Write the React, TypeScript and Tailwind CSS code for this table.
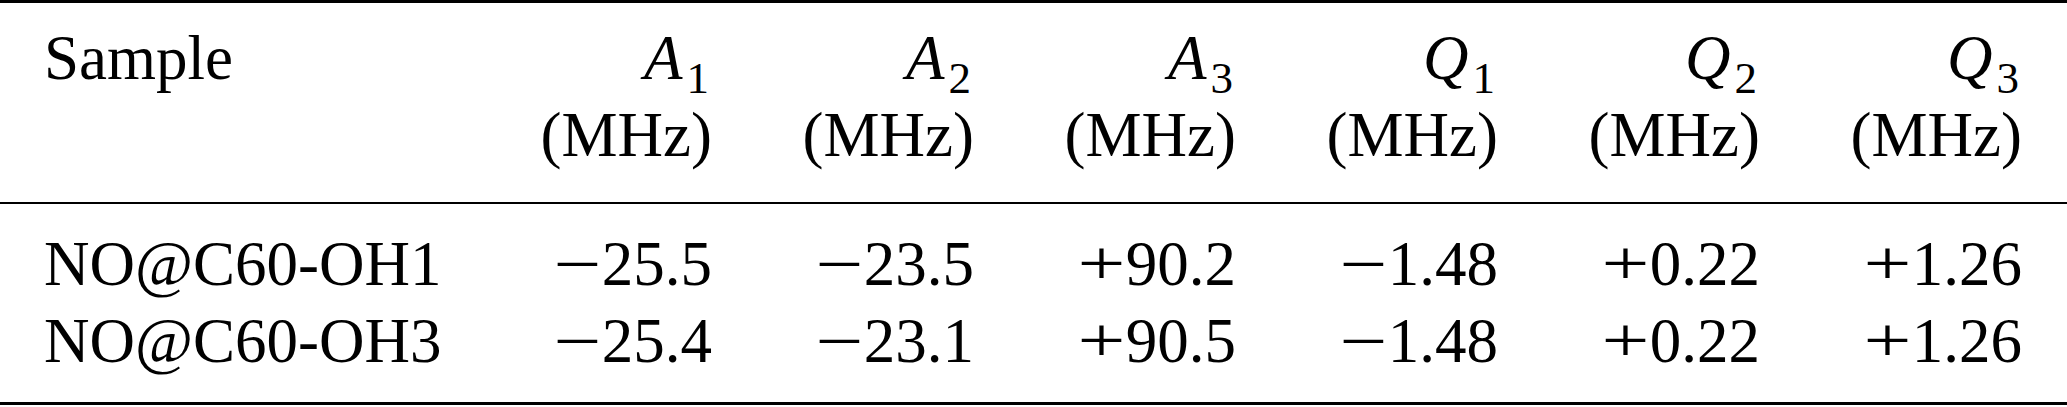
import React from "react";

type Cell = { sign: string; num: string };

const headers: { sym: string; sub: string }[] = [
  { sym: "A", sub: "1" },
  { sym: "A", sub: "2" },
  { sym: "A", sub: "3" },
  { sym: "Q", sub: "1" },
  { sym: "Q", sub: "2" },
  { sym: "Q", sub: "3" },
];

const rows: { name: string; vals: Cell[] }[] = [
  {
    name: "NO@C60-OH1",
    vals: [
      { sign: "−", num: "25.5" },
      { sign: "−", num: "23.5" },
      { sign: "+", num: "90.2" },
      { sign: "−", num: "1.48" },
      { sign: "+", num: "0.22" },
      { sign: "+", num: "1.26" },
    ],
  },
  {
    name: "NO@C60-OH3",
    vals: [
      { sign: "−", num: "25.4" },
      { sign: "−", num: "23.1" },
      { sign: "+", num: "90.5" },
      { sign: "−", num: "1.48" },
      { sign: "+", num: "0.22" },
      { sign: "+", num: "1.26" },
    ],
  },
];

function Sign({ s }: { s: string }) {
  return (
    <span className="inline-block w-[0.78em] text-center scale-x-[1.35]">{s}</span>
  );
}

export default function App() {
  return (
    <div
      className="w-[2067px] h-[407px] bg-white text-black overflow-hidden"
      style={{ fontFamily: '"Liberation Serif", "Times New Roman", serif' }}
    >
      <div className="text-[63px] leading-[77px]">
        {/* header */}
        <div className="border-t-[3px] border-black pt-[17px] pb-[28px] pl-[44px] pr-[45px]">
          <div className="grid grid-cols-[406px_repeat(6,262px)]">
            <div>Sample</div>
            {headers.map((h, i) => (
              <div key={i} className="text-right">
                <div className="pr-[3px]">
                  <span className="italic">{h.sym}</span>
                  <span className="text-[45px] leading-none relative top-[14px] ml-[4px]">{h.sub}</span>
                </div>
                <div>(MHz)</div>
              </div>
            ))}
          </div>
        </div>
        {/* body */}
        <div className="border-t-[2px] border-black pt-[22px] pb-[22px] pl-[44px] pr-[45px]">
          {rows.map((r) => (
            <div key={r.name} className="grid grid-cols-[406px_repeat(6,262px)]">
              <div>{r.name}</div>
              {r.vals.map((v, i) => (
                <div key={i} className="text-right whitespace-nowrap">
                  <Sign s={v.sign} />
                  {v.num}
                </div>
              ))}
            </div>
          ))}
        </div>
        <div className="border-t-[3px] border-black" />
      </div>
    </div>
  );
}
